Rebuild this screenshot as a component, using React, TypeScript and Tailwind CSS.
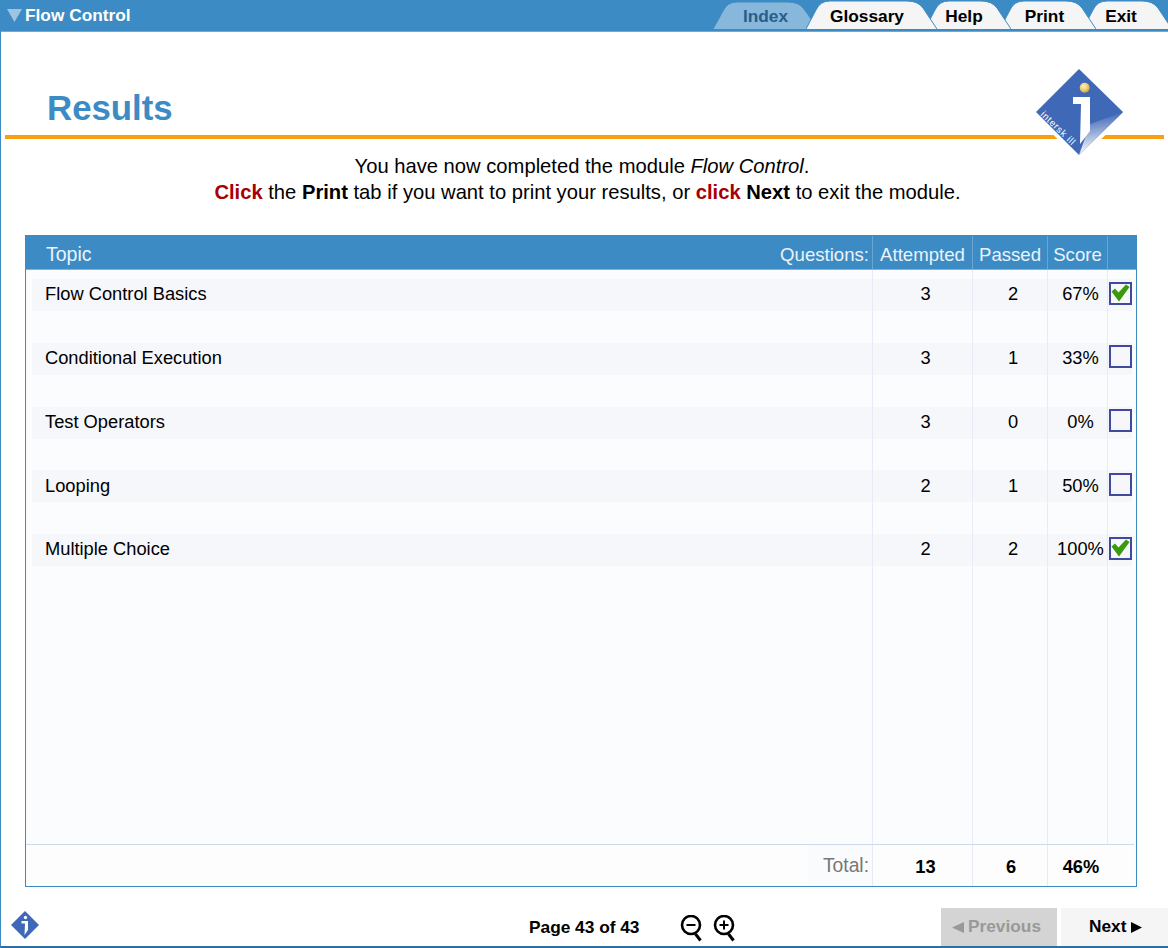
const rows = [
  { topic: 'Flow Control Basics', attempted: 3, passed: 2, score: '67%', done: true },
  { topic: 'Conditional Execution', attempted: 3, passed: 1, score: '33%', done: false },
  { topic: 'Test Operators', attempted: 3, passed: 0, score: '0%', done: false },
  { topic: 'Looping', attempted: 2, passed: 1, score: '50%', done: false },
  { topic: 'Multiple Choice', attempted: 2, passed: 2, score: '100%', done: true },
];

const tabs = [
  { label: 'Index', width: 105, ml: 0, top: 2, z: 'z-0', fill: '#87b7da', text: 'text-[#2a5d88]', shift: 0 },
  { label: 'Glossary', width: 131, ml: -12, top: 1, z: 'z-40', fill: '#f5f5f5', text: 'text-black', shift: -9 },
  { label: 'Help', width: 86, ml: -12, top: 1, z: 'z-30', fill: '#f5f5f5', text: 'text-black', shift: -8 },
  { label: 'Print', width: 96, ml: -11, top: 1, z: 'z-20', fill: '#f5f5f5', text: 'text-black', shift: -7 },
  { label: 'Exit', width: 89, ml: -13, top: 1, z: 'z-10', fill: '#f5f5f5', text: 'text-black', shift: -13 },
];

function Tab({ label, width, ml, top, z, fill, text, shift }: (typeof tabs)[number]) {
  const d = `M0 29 L10 ${top + 9} Q14 ${top} 24 ${top} L${width - 30} ${top} Q${width - 19} ${top} ${width - 14} ${top + 7} L${width} 29`;
  return (
    <div
      className={`relative h-[30px] flex items-center justify-center shrink-0 ${z}`}
      style={{ width, marginLeft: ml }}
    >
      <svg className="absolute inset-0" width={width} height={30}>
        <path d={`${d} Z`} fill={fill} />
        <path d={d} fill="none" stroke="#3d8bc4" strokeWidth={1} />
      </svg>
      <span
        className={`relative text-[17.3px] font-bold pt-[4px] ${text}`}
        style={{ marginLeft: shift }}
      >
        {label}
      </span>
    </div>
  );
}

function Logo() {
  return (
    <svg
      className="absolute left-[1029px] top-[32px]"
      width={100}
      height={96}
      viewBox="1030 64 100 96"
    >
      <defs>
        <linearGradient id="fold" x1="0.5" y1="0.05" x2="0.6" y2="0.8">
          <stop offset="0" stopColor="#3f68b6" />
          <stop offset="1" stopColor="#e4e9f5" />
        </linearGradient>
        <radialGradient id="ball" cx="0.4" cy="0.35" r="0.7">
          <stop offset="0" stopColor="#fff3c4" />
          <stop offset="0.6" stopColor="#efc868" />
          <stop offset="1" stopColor="#c79a3a" />
        </radialGradient>
      </defs>
      <polygon points="1079,62 1130,112 1079,160 1030,112" fill="#ffffff" />
      <polygon points="1079,69 1123,112 1079,155 1036,112" fill="#3f68b6" />
      <polygon points="1123,112 1079,155 1090,124" fill="url(#fold)" />
      <polygon points="1073,97 1090,97 1090,131 1080,144 1081,104 1073,104" fill="#ffffff" />
      <circle cx="1084.7" cy="87.7" r="5" fill="url(#ball)" />
      <text
        x="1040"
        y="115"
        transform="rotate(44 1040 115)"
        fill="#ffffff"
        fontSize="9.5"
        letterSpacing="0.7"
        fontFamily="'Liberation Sans', sans-serif"
      >
        intersk ill
      </text>
    </svg>
  );
}

function SmallLogo() {
  return (
    <svg width={28} height={28} viewBox="0 0 28 28">
      <polygon points="14,0 28,14 14,28 0,14" fill="#3f68b6" />
      <circle cx="14.5" cy="6.5" r="1.7" fill="#ffffff" />
      <polygon points="10.5,10 17,10 17,19 13.5,24 14,12.5 10.5,12.5" fill="#ffffff" />
    </svg>
  );
}

function ZoomIcon({ plus }: { plus?: boolean }) {
  return (
    <svg width={24} height={28} viewBox="0 0 24 28" fill="none" stroke="#000000">
      <circle cx="11" cy="10" r="9" strokeWidth={2.6} />
      <path d="M15.5 19 L20.5 25.5" strokeWidth={3} />
      <path d="M6.5 10 H15.5" strokeWidth={2} />
      {plus && <path d="M11 5.5 V14.5" strokeWidth={2} />}
    </svg>
  );
}

function Checkbox({ checked }: { checked: boolean }) {
  return (
    <div className="relative w-[23px] h-[23px] -mt-[4px] border-2 border-[#3f4a9f] bg-[#f6f7fa]">
      {checked && (
        <svg className="absolute inset-0" width={19} height={19} viewBox="0 0 19 19">
          <path d="M0.5 7.5 L4 4.5 L7.5 8.5 L15 0.5 L18.5 3 L8 17.5 Z" fill="#3a9a0a" />
        </svg>
      )}
    </div>
  );
}

function Cell({ className, children }: { className: string; children: React.ReactNode }) {
  return (
    <div className="pt-[9px] pb-[22.8px] border-r border-[#e8ebf5]">
      <div className={`h-full flex items-center pb-[2px] bg-[#f6f7fa] ${className}`}>{children}</div>
    </div>
  );
}

const gridCols = 'grid grid-cols-[847px_100px_75px_60px_1fr]';

export default function App() {
  return (
    <div className="w-[1168px] h-[948px] flex flex-col overflow-hidden bg-white border-l border-[#3d8bc4] border-b-2 border-b-[#2f6ea5] font-['Liberation_Sans',sans-serif] text-black">
      <header className="h-[32px] shrink-0 flex items-start justify-between bg-[#3d8bc4] border-b border-[#6fa9d8]">
        <div className="flex items-center h-[31px] pl-[6px] gap-[3px]">
          <svg width={15} height={13} viewBox="0 0 15 13">
            <polygon points="0,0 15,0 7.5,13" fill="#9dc4e3" />
          </svg>
          <span className="text-[17.3px] font-bold text-white">Flow Control</span>
        </div>
        <div className="flex w-[455px] overflow-hidden">
          {tabs.map((tab) => (
            <Tab key={tab.label} {...tab} />
          ))}
        </div>
      </header>

      <section className="relative shrink-0">
        <h1 className="pl-[46px] pt-[56px] text-[34.8px] leading-[40px] font-bold text-[#3d8bc4]">Results</h1>
        <div className="h-[4px] mt-[7px] ml-[4px] mr-[4px] bg-[#f8a012]" />
        <Logo />
      </section>

      <div className="mt-[14px] text-center text-[20.2px] leading-[26px]">
        <p className="-ml-[5px]">
          You have now completed the module <em>Flow Control</em>.
        </p>
        <p className="ml-[6px]">
          <b className="text-[#a80000]">Click</b> the <b>Print</b> tab if you want to print your results, or{' '}
          <b className="text-[#a80000]">click</b> <b>Next</b> to exit the module.
        </p>
      </div>

      <div className="mt-[30px] ml-[24px] w-[1112px] h-[652px] flex flex-col border border-[#3d8bc4] bg-[#fbfcfe] text-[18.3px]">
        <div className={`${gridCols} h-[34px] shrink-0 pt-[4px] bg-[#3d8bc4] border-b border-[#7fb2dc] text-[18.6px] text-[#eaf3fa]`}>
          <div className="flex items-center justify-between pl-[20px] pr-[3px] border-r border-[#6ba5d4] -mt-[4px] pt-[4px]">
            <span className="text-[19.5px]">Topic</span>
            <span>Questions:</span>
          </div>
          <div className="flex items-center justify-center border-r border-[#6ba5d4] -mt-[4px] pt-[4px]">Attempted</div>
          <div className="flex items-center justify-center border-r border-[#6ba5d4] -mt-[4px] pt-[4px]">Passed</div>
          <div className="flex items-center justify-center border-r border-[#6ba5d4] -mt-[4px] pt-[4px]">Score</div>
          <div />
        </div>

        {rows.map((row) => (
          <div key={row.topic} className={`${gridCols} h-[63.8px] shrink-0`}>
            <Cell className="ml-[6px] pl-[13px]">{row.topic}</Cell>
            <Cell className="justify-center pl-[6px]">{row.attempted}</Cell>
            <Cell className="justify-center pl-[6px]">{row.passed}</Cell>
            <Cell className="justify-center pl-[6px]">{row.score}</Cell>
            <div className="pt-[9px] pb-[22.8px] pr-[4px]">
              <div className="h-full flex items-center pl-[1px] bg-[#f6f7fa]">
                <Checkbox checked={row.done} />
              </div>
            </div>
          </div>
        ))}

        <div className={`${gridCols} flex-1`}>
          <div className="border-r border-[#e8ebf5]" />
          <div className="border-r border-[#e8ebf5]" />
          <div className="border-r border-[#e8ebf5]" />
          <div className="border-r border-[#e8ebf5]" />
          <div className="border-r-0" />
        </div>

        <div className={`${gridCols} h-[42px] shrink-0 mr-[2px] border-t border-[#ccdaee] bg-[#fdfdfe]`}>
          <div className="flex justify-end border-r border-[#e8ebf5]">
            <span className="w-[64px] pr-[3px] pt-[2px] flex items-center justify-end bg-[#fafbfc] text-[19.3px] text-[#777777]">Total:</span>
          </div>
          <div className="flex items-center justify-center pl-[6px] pt-[2px] font-bold border-r border-[#e8ebf5]">13</div>
          <div className="flex items-center justify-center pl-[2px] pt-[2px] font-bold border-r border-[#e8ebf5]">6</div>
          <div className="flex items-center justify-center pl-[6px] pt-[2px] font-bold">46%</div>
          <div />
        </div>
      </div>

      <footer className="flex-1 relative flex items-end">
        <div className="absolute left-[10px] top-[24px]">
          <SmallLogo />
        </div>
        <div className="absolute left-[528px] top-[28px] text-[17.3px] font-bold">Page 43 of 43</div>
        <div className="absolute left-[679px] top-[28px] flex gap-[9px]">
          <ZoomIcon />
          <ZoomIcon plus />
        </div>
        <div className="ml-auto flex gap-[4px] h-[38px] text-[17.3px] font-bold">
          <div className="w-[116px] pl-[11px] flex items-center gap-[4px] bg-[#d4d4d4] text-[#999999]">
            <svg width={12} height={11} viewBox="0 0 12 11">
              <polygon points="12,0 12,11 0,5.5" fill="#999999" />
            </svg>
            Previous
          </div>
          <div className="w-[107px] pl-[28px] flex items-center gap-[5px] bg-[#f5f5f5]">
            Next
            <svg width={11} height={11} viewBox="0 0 11 11">
              <polygon points="0,0 11,5.5 0,11" fill="#000000" />
            </svg>
          </div>
        </div>
      </footer>
    </div>
  );
}
